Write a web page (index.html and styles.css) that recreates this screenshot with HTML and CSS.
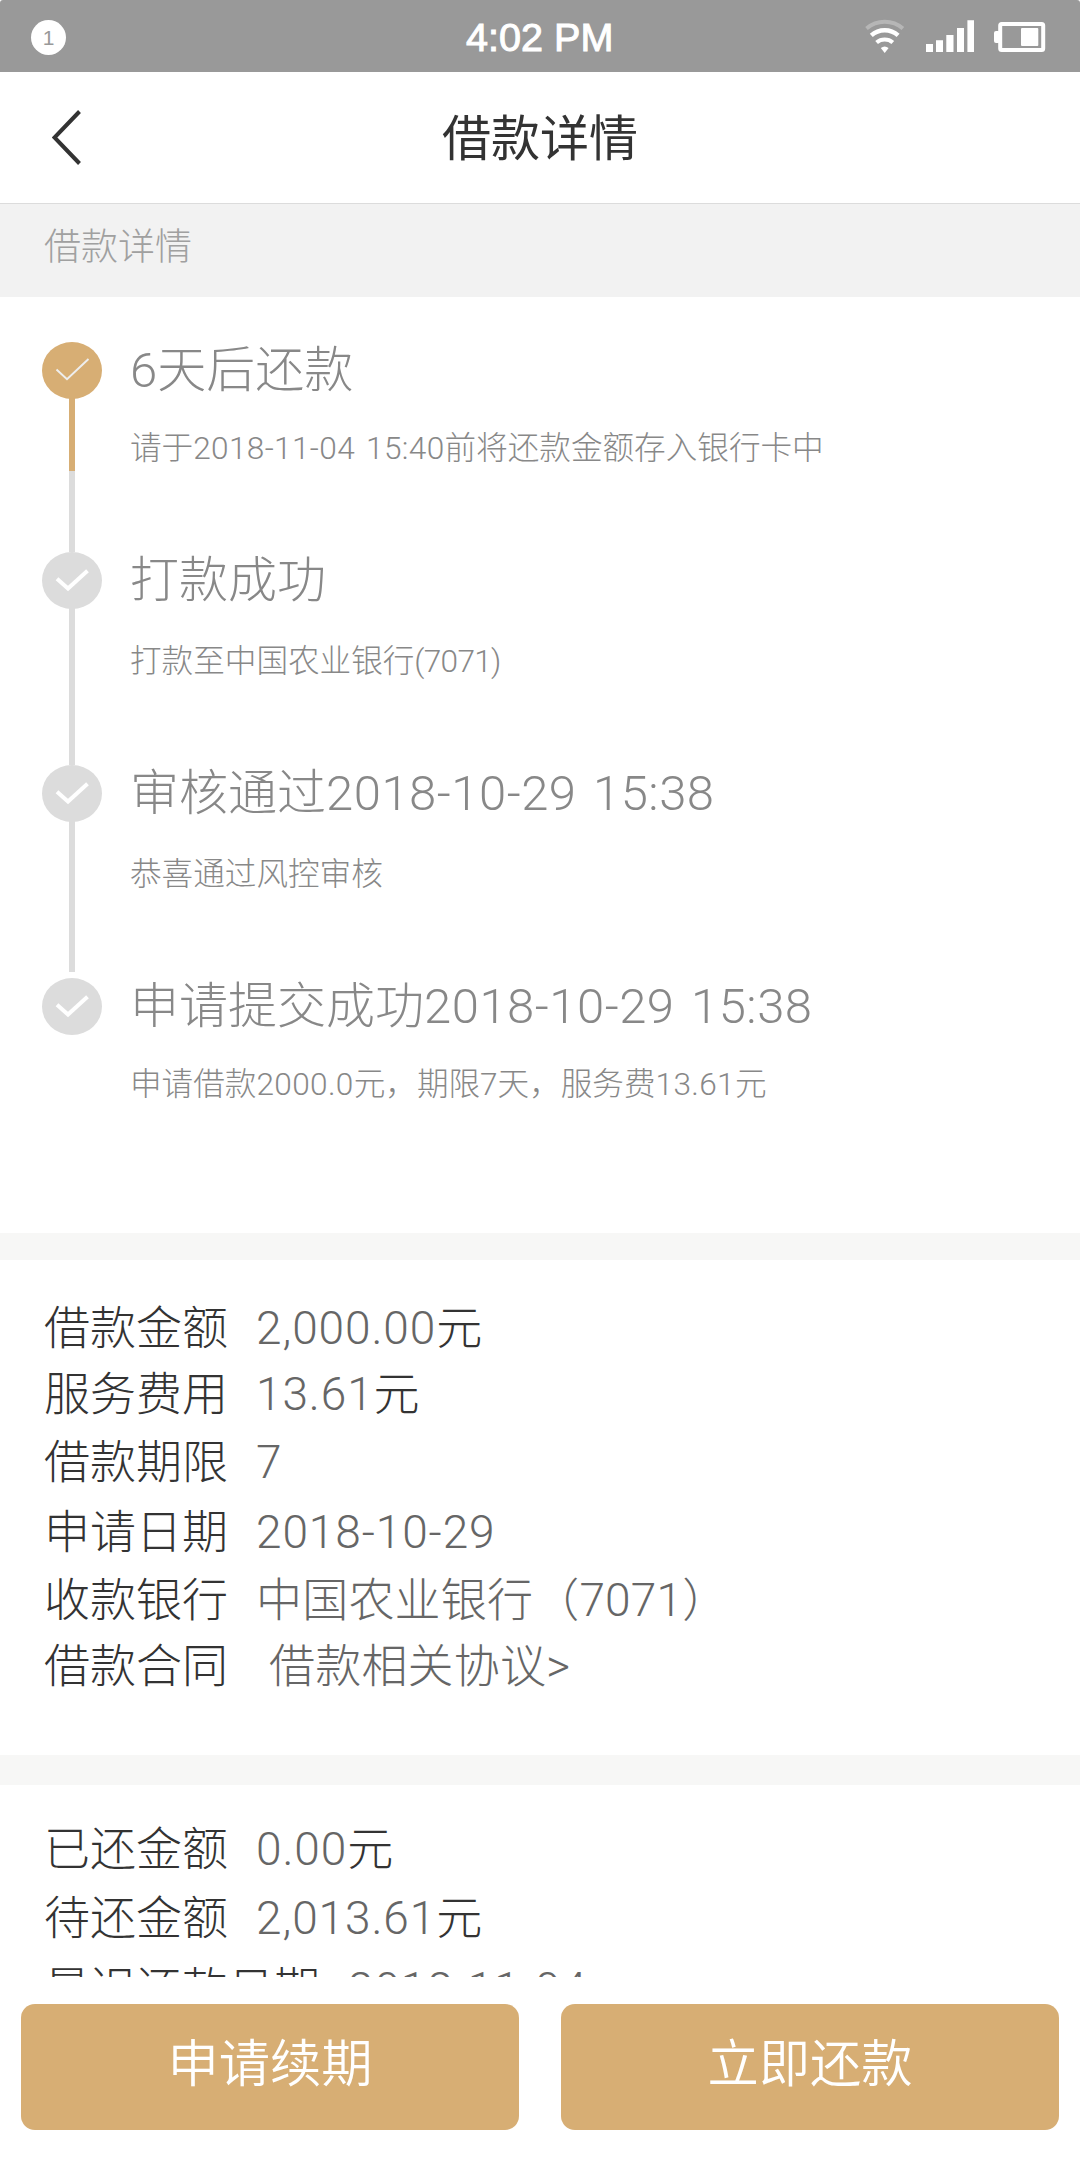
FILE: index.html
```
<!DOCTYPE html>
<html lang="zh-CN">
<head>
<meta charset="UTF-8" />
<title>借款详情</title>
<link rel="stylesheet" href="styles.css">
</head>
<body>

<div class="statusbar">
  <span class="badge">1</span>
  <span class="time">4:02 PM</span>
  <svg class="icons" width="143" height="72" viewBox="0 0 143 72" fill="none">
    <!-- wifi -->
    <path d="M16.5 27.5a28 28 0 0 1 36.4 0" stroke="#b6b6b6" stroke-width="4" />
    <path d="M21.3 34.4a20 20 0 0 1 26.8 0" stroke="#fff" stroke-width="4.4" />
    <path d="M26.6 41.5a12.5 12.5 0 0 1 16.2 0" stroke="#fff" stroke-width="4.2" />
    <path d="M30.8 47q3.9-3 7.8 0l-3.9 5z" fill="#fff" />
    <!-- signal -->
    <path d="M76 43h7v8h-7zM86 39.3h7V51h-7zM96.3 34h7.2v17h-7.2zM107 27h7v24h-7zM117.4 19.3h6.6V51h-6.6z" fill="#fff" />
  </svg>
  <svg class="battery" width="52" height="30" viewBox="0 0 52 30">
    <rect x="6.2" y="2" width="43" height="26" rx="1.5" fill="none" stroke="#fff" stroke-width="4" />
    <rect x="0" y="9" width="6" height="12" rx="2" fill="#fff" />
    <rect x="27" y="6" width="17.3" height="18" rx="1" fill="#fff" />
  </svg>
</div>

<div class="navbar">
  <svg class="back" width="30" height="56" viewBox="0 0 30 56">
    <path d="M27.5 1.5L2.5 27.5l25 26" fill="none" stroke="#333" stroke-width="4" />
  </svg>
  <h1>借款详情</h1>
</div>

<div class="subtitle">借款详情</div>

<div class="content">
  <ul class="timeline">
    <li class="step active">
      <svg class="dot" width="60" height="57" viewBox="0 0 60 57">
        <ellipse cx="30" cy="28.5" rx="30" ry="28.5" />
        <path d="M14.5 27.5L25 37.2 46.5 17" />
      </svg>
      <div class="text">
        <h2>6天后还款</h2>
        <p>请于<span>2018-11-04 15:40</span>前将还款金额存入银行卡中</p>
      </div>
    </li>
    <li class="step">
      <svg class="dot" width="60" height="57" viewBox="0 0 60 57">
        <ellipse cx="30" cy="28.5" rx="30" ry="28.5" />
        <path d="M15 26.8L26 36.5 45.5 18.8" />
      </svg>
      <div class="text">
        <h2>打款成功</h2>
        <p>打款至中国农业银行<span class="card">(7071)</span></p>
      </div>
    </li>
    <li class="step">
      <svg class="dot" width="60" height="57" viewBox="0 0 60 57">
        <ellipse cx="30" cy="28.5" rx="30" ry="28.5" />
        <path d="M15 26.8L26 36.5 45.5 18.8" />
      </svg>
      <div class="text">
        <h2>审核通过<span>2018-10-29 15:38</span></h2>
        <p>恭喜通过风控审核</p>
      </div>
    </li>
    <li class="step last">
      <svg class="dot" width="60" height="57" viewBox="0 0 60 57">
        <ellipse cx="30" cy="28.5" rx="30" ry="28.5" />
        <path d="M15 26.8L26 36.5 45.5 18.8" />
      </svg>
      <div class="text">
        <h2>申请提交成功<span>2018-10-29 15:38</span></h2>
        <p>申请借款<span>2000.0</span>元，期限7天，服务费<span>13.61</span>元</p>
      </div>
    </li>
  </ul>

  <div class="info loan">
    <div class="row">借款金额<span>2,000.00</span>元</div>
    <div class="row">服务费用<span>13.61</span>元</div>
    <div class="row">借款期限<span>7</span></div>
    <div class="row">申请日期<span>2018-10-29</span></div>
    <div class="row">收款银行<span class="bank">中国农业银行（7071）</span></div>
    <div class="row">借款合同<span class="link">借款相关协议&gt;</span></div>
  </div>

  <div class="info repay">
    <div class="row">已还金额<span>0.00</span>元</div>
    <div class="row">待还金额<span>2,013.61</span>元</div>
    <div class="row">最迟还款日期<span>2018-11-04</span></div>
  </div>
</div>

<div class="footer">
  <button>申请续期</button>
  <button>立即还款</button>
</div>

</body>
</html>
```
FILE: styles.css
```
* { box-sizing: border-box; margin: 0; padding: 0; }
body { width: 1080px; height: 2160px; overflow: hidden; display: flex; flex-direction: column; background: #fff; color: #333; font-family: Roboto, "Noto Sans CJK SC", sans-serif; font-weight: 300; }
h1, h2 { font-weight: 300; }

.statusbar { flex: none; height: 72px; background: #999; border-radius: 3px 3px 0 0; display: grid; grid-template-columns: 466px 1fr 144px 87px; align-items: center; color: #fff; }
.badge { width: 35px; height: 35px; margin-left: 31px; border-radius: 50%; background: #fff; color: #999; font: 500 21px/35px "Liberation Sans", sans-serif; text-align: center; }
.time { font: 39.6px/74px "Liberation Sans", sans-serif; -webkit-text-stroke: 1px #fff; }
.icons { margin-left: 1px; }
.battery { margin-left: 1px; }

.navbar { flex: none; height: 132px; border-bottom: 1px solid #dcdcdc; display: grid; grid-template-columns: 52px 1fr 52px; align-items: center; }
.back { margin-left: 52px; }
.navbar h1 { padding-top: 5px; font-size: 49px; line-height: 60px; text-align: center; font-weight: 400; }

.subtitle { flex: none; height: 93px; padding-left: 44px; background: #f2f2f2; color: #a0a0a0; font-size: 37px; line-height: 88px; }

.content { flex: none; height: 1680px; overflow: hidden; }
.timeline { list-style: none; height: 936px; padding: 45px 0 0 42px; }
.step { position: relative; display: flex; gap: 28px; height: 213px; }
.step.active { height: 210px; }
.step::before { content: ""; position: absolute; left: 27px; top: 50px; bottom: 0; width: 6px; background: #dcdcdc; }
.step.active::before { background: linear-gradient(#d7ae74 79px, #dcdcdc 79px); }
.step.last::before { display: none; }
.step:nth-child(3)::before { bottom: 6px; }
.dot { position: relative; flex: none; fill: #dcdcdc; }
.dot path { fill: none; stroke: #fff; stroke-width: 4; }
.active .dot { fill: #d7ae74; }
.active .dot path { stroke: #eee; stroke-width: 2; }
.text { padding-top: 2px; color: #888; }
.text h2 { font-size: 49px; line-height: 54px; }
.text p { font-size: 31.6px; line-height: 40px; margin-top: 34px; }
.active p, .last p { margin-top: 31px; }
.text span { letter-spacing: 0.5px; word-spacing: 4px; }
.text p span { letter-spacing: 0.35px; word-spacing: 3px; }
.text .card { letter-spacing: -0.7px; }

.info { padding-left: 44px; display: grid; align-content: start; font-size: 46px; line-height: 66px; }
.info span { margin-left: 28px; color: #666; letter-spacing: 0.9px; }
.info .bank { letter-spacing: 0.2px; }
.info .link { margin-left: 41px; letter-spacing: 0.2px; }
.loan { height: 522px; border-top: 27px solid #f7f7f6; padding-top: 35px; grid-template-rows: 66px 66px 70px 70px 66px 66px; align-items: center; }
.repay { border-top: 30px solid #f7f7f6; padding-top: 31px; grid-template-rows: 66px 72px 70px; align-items: center; }

.footer { flex: none; height: 183px; padding: 27px 21px 30px; display: grid; grid-template-columns: 1fr 1fr; gap: 42px; background: #fff; }
.footer button { border: 0; border-radius: 14px; background: #d7ae74; color: #fff; font: inherit; font-weight: 350; font-size: 51.3px; line-height: 60px; padding-bottom: 5px; }
```
